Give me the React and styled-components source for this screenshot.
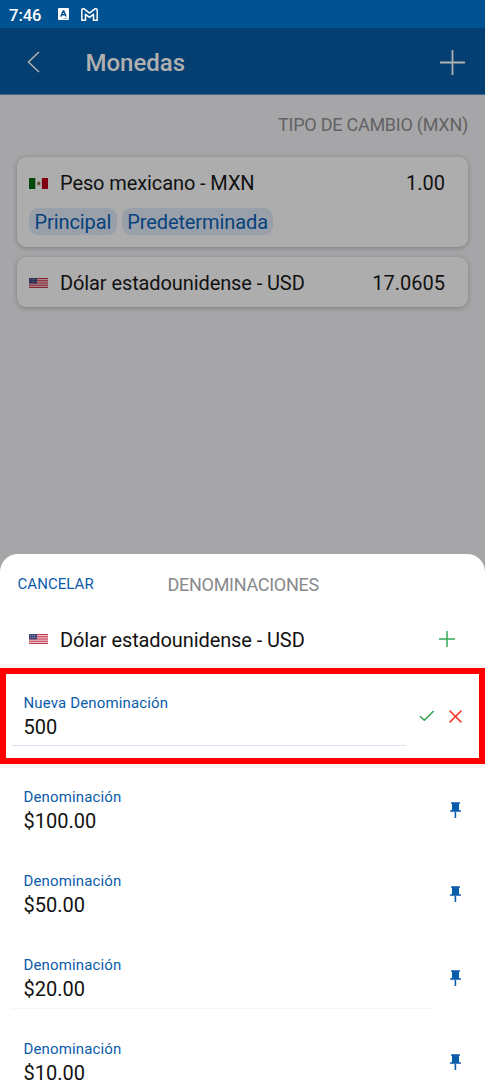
import styled, { createGlobalStyle } from "styled-components";

const GlobalStyle = createGlobalStyle`
  * {
    box-sizing: border-box;
  }

  body {
    margin: 0;
    font-family: Roboto, "Liberation Sans", sans-serif;
    overflow: hidden;
  }
`;

const denominations = [
  { value: "$100.00", line: "#fff" },
  { value: "$50.00", line: "#fcfcfc" },
  { value: "$20.00", line: "#f5f5f6" },
  { value: "$10.00", line: "#f5f5f6" },
];

function KeyboardIcon() {
  return (
    <svg width="11" height="12" viewBox="0 0 11 12">
      <rect width="11" height="12" rx="1" fill="#fff" />
      <path
        d="M2.8 8.6 5.2 3h.6l2.3 5.6M3.8 6.8h3.4"
        fill="none"
        stroke="#005293"
        strokeWidth="1.4"
      />
      <path d="M5.5 10.5h4" stroke="#7fa8c9" strokeWidth=".8" />
    </svg>
  );
}

function MailIcon() {
  return (
    <svg width="17" height="13" viewBox="0 0 17 13" fill="none" stroke="#fff">
      <path
        d="M.8 2.2Q.8.8 2.2.8h.9l5.4 4.3L13.9.8h.9q1.4 0 1.4 1.4v10h-3.7V6.3l-4 3.1-4-3.1v5.9H.8z"
        strokeWidth="1.5"
        strokeLinejoin="round"
      />
    </svg>
  );
}

function BackIcon() {
  return (
    <svg width="13" height="22" viewBox="0 0 13 22">
      <path d="M12 1 1.5 11 12 21" fill="none" stroke="#b0b0b0" strokeWidth="1.5" />
    </svg>
  );
}

function PlusIcon({ size, color, stroke }) {
  const half = size / 2;
  return (
    <svg width={size} height={size} viewBox={`0 0 ${size} ${size}`}>
      <path
        d={`M0 ${half}h${size}M${half} 0v${size}`}
        fill="none"
        stroke={color}
        strokeWidth={stroke}
      />
    </svg>
  );
}

function CheckIcon() {
  return (
    <svg width="16" height="12" viewBox="0 0 16 12">
      <path d="M1 6.2 5.3 10.2 14.7 1" fill="none" stroke="#2fa24f" strokeWidth="1.5" />
    </svg>
  );
}

function CloseIcon() {
  return (
    <svg width="13" height="13" viewBox="0 0 13 13">
      <path d="M.6.6l11.8 11.8M12.4.6.6 12.4" fill="none" stroke="#fb3b30" strokeWidth="1.5" />
    </svg>
  );
}

function PinIcon() {
  return (
    <svg width="11" height="16" viewBox="0 0 11 16" fill="#0b5cab">
      <path d="M1 .3h9v1.5H9V8l2 .6v1.2H0V8.6L2 8V1.8H1z" />
      <path d="M4.6 9.5h1.6V16H4.6z" />
    </svg>
  );
}

function MexicoFlag() {
  return (
    <svg width="19" height="11" viewBox="0 0 19 11">
      <rect width="19" height="11" fill="#aeaeae" />
      <rect width="6.3" height="11" fill="#00490b" />
      <rect x="12.9" width="6.1" height="11" fill="#810014" />
      <path d="M8 4.5 10 3.3l1.7 1.5-.4 2-1.5 1-1.6-.9z" fill="#75664f" />
      <path d="M9 4.3h1.7v1.9H9z" fill="#583c25" />
    </svg>
  );
}

function UsaFlag({ dim }) {
  const white = dim ? "#aaa6a8" : "#f6eef1";
  const red = dim ? "#8a2030" : "#c33149";
  const blue = dim ? "#303054" : "#464979";
  const star = dim ? "#66667f" : "#9094b0";
  return (
    <svg width="19" height="10" viewBox="0 0 19 10">
      <rect width="19" height="10" fill={white} />
      {[0, 1.8, 3.6, 5.4, 7.2, 9].map((y) => (
        <rect key={y} y={y} width="19" height="1" fill={red} />
      ))}
      <rect width="8" height="5.4" fill={blue} />
      <path
        d="M1 1.5h6M1 3.5h6"
        stroke={star}
        strokeWidth=".8"
        strokeDasharray="1 1"
      />
    </svg>
  );
}

function Denomination({ value, line }) {
  return (
    <DenominationRow>
      <Field $line={line}>
        <Label>Denominación</Label>
        <Value>{value}</Value>
      </Field>
      <PinIcon />
    </DenominationRow>
  );
}

function App() {
  return (
    <Screen>
      <GlobalStyle />
      <StatusBar>
        <Time>7:46</Time>
        <KeyboardIcon />
        <MailIcon />
      </StatusBar>
      <Header>
        <BackIcon />
        <Title>Monedas</Title>
        <PlusIcon size={25} color="#b0b0b0" stroke={1.8} />
      </Header>
      <Backdrop>
        <RateHeading>TIPO DE CAMBIO (MXN)</RateHeading>
        <Card $height="90px">
          <CardLine>
            <MexicoFlag />
            <Currency>Peso mexicano - MXN</Currency>
            <Rate>1.00</Rate>
          </CardLine>
          <Tags>
            <Tag>Principal</Tag>
            <Tag>Predeterminada</Tag>
          </Tags>
        </Card>
        <Card $height="50px">
          <CardLine>
            <UsaFlag dim />
            <Currency>Dólar estadounidense - USD</Currency>
            <Rate>17.0605</Rate>
          </CardLine>
        </Card>
      </Backdrop>
      <Sheet>
        <SheetHeader>
          <Cancel>CANCELAR</Cancel>
          <SheetTitle>DENOMINACIONES</SheetTitle>
        </SheetHeader>
        <CurrencyRow>
          <UsaFlag />
          <SheetCurrency>Dólar estadounidense - USD</SheetCurrency>
          <PlusIcon size={16} color="#36a853" stroke={1.5} />
        </CurrencyRow>
        <NewDenomination>
          <NewField $line="#d6e2ed">
            <Label>Nueva Denominación</Label>
            <Value>500</Value>
          </NewField>
          <CheckIcon />
          <CloseIcon />
        </NewDenomination>
        <List>
          {denominations.map((item) => (
            <Denomination key={item.value} {...item} />
          ))}
        </List>
      </Sheet>
    </Screen>
  );
}

export default App;

const Screen = styled.div`
  width: 485px;
  height: 1080px;
  display: flex;
  flex-direction: column;
  overflow: hidden;
  background: #a6a6a8;
  color: #111;
`;

const StatusBar = styled.div`
  flex: none;
  height: 28px;
  padding-left: 9px;
  display: flex;
  align-items: center;
  background: #005293;
  color: #fff;

  svg:last-child {
    margin-left: 12px;
  }
`;

const Time = styled.span`
  width: 49px;
  padding-top: 2px;
  font-size: 16.5px;
  font-weight: 500;
`;

const Header = styled.div`
  flex: none;
  height: 67px;
  padding: 2px 20px 0 27px;
  display: flex;
  align-items: center;
  background: #053f72;
  border-bottom: 1px solid #45678a;
`;

const Title = styled.h1`
  flex: 1;
  margin: 0 0 0 45.5px;
  padding-top: 2px;
  font-size: 24px;
  font-weight: 500;
  color: #b0b0b0;
`;

const Backdrop = styled.div`
  flex: none;
  height: 459px;
  padding: 0 17px;
`;

const RateHeading = styled.div`
  height: 62px;
  padding-top: 19px;
  line-height: 21px;
  font-size: 18px;
  letter-spacing: -0.25px;
  text-align: right;
  color: #626264;
`;

const Card = styled.div`
  height: ${(props) => props.$height};
  margin-bottom: 10px;
  padding: 13px 23px 0 12px;
  background: #adadad;
  border-radius: 9px;
  box-shadow: 0 1px 5px rgba(0, 0, 0, 0.25);
`;

const CardLine = styled.div`
  height: 26px;
  display: flex;
  align-items: center;
`;

const Currency = styled.span`
  flex: 1;
  margin-left: 12px;
  font-size: 20px;
  letter-spacing: -0.1px;
  white-space: nowrap;
`;

const SheetCurrency = styled(Currency)`
  padding-top: 1px;
`;

const Rate = styled.span`
  font-size: 20px;
`;

const Tags = styled.div`
  display: flex;
  gap: 5px;
  margin-top: 12px;
`;

const Tag = styled.span`
  height: 27px;
  padding: 0 5.5px;
  line-height: 29px;
  font-size: 20px;
  letter-spacing: -0.1px;
  border-radius: 9px;
  background: #99a0aa;
  color: #07427c;
`;

const Sheet = styled.div`
  flex: none;
  height: 526px;
  background: #fff;
  border-radius: 18px 18px 0 0;
  overflow: hidden;
`;

const SheetHeader = styled.div`
  height: 60px;
  padding-left: 17.5px;
  display: flex;
  align-items: center;
`;

const Cancel = styled.span`
  width: 150px;
  font-size: 15px;
  letter-spacing: 0.05px;
  color: #0b5cab;
`;

const SheetTitle = styled.span`
  padding-top: 1px;
  font-size: 18px;
  letter-spacing: -0.28px;
  color: #88898c;
`;

const CurrencyRow = styled.div`
  height: 54px;
  padding: 0 30px 0 29px;
  display: flex;
  align-items: center;
  border-bottom: 4px solid #f4f5f6;
`;

const NewDenomination = styled.div`
  height: 96px;
  padding: 14px 17px 0 6px;
  display: flex;
  align-items: flex-start;
  border: 6px solid #fe0000;

  svg {
    margin-top: 22px;
  }

  svg:last-child {
    margin: 22px 0 0 14px;
  }
`;

const Field = styled.div`
  flex: 1;
  height: 73px;
  padding: 19px 11.5px 0;
  margin-right: 16px;
  border-bottom: 1px solid ${(props) => props.$line};
`;

const NewField = styled(Field)`
  height: 58px;
  padding-top: 5px;
  margin-right: 13px;
`;

const Label = styled.div`
  line-height: 20px;
  font-size: 15px;
  letter-spacing: 0.14px;
  color: #0b5cab;
`;

const Value = styled.div`
  margin-top: 2px;
  line-height: 24px;
  font-size: 20px;
`;

const List = styled.div`
  display: flex;
  flex-direction: column;
  gap: 11px;
  border-top: 4px solid #f4f5f6;
`;

const DenominationRow = styled.div`
  display: flex;
  padding: 0 24px 0 12px;
  align-items: flex-start;

  svg {
    margin-top: 34px;
  }
`;
